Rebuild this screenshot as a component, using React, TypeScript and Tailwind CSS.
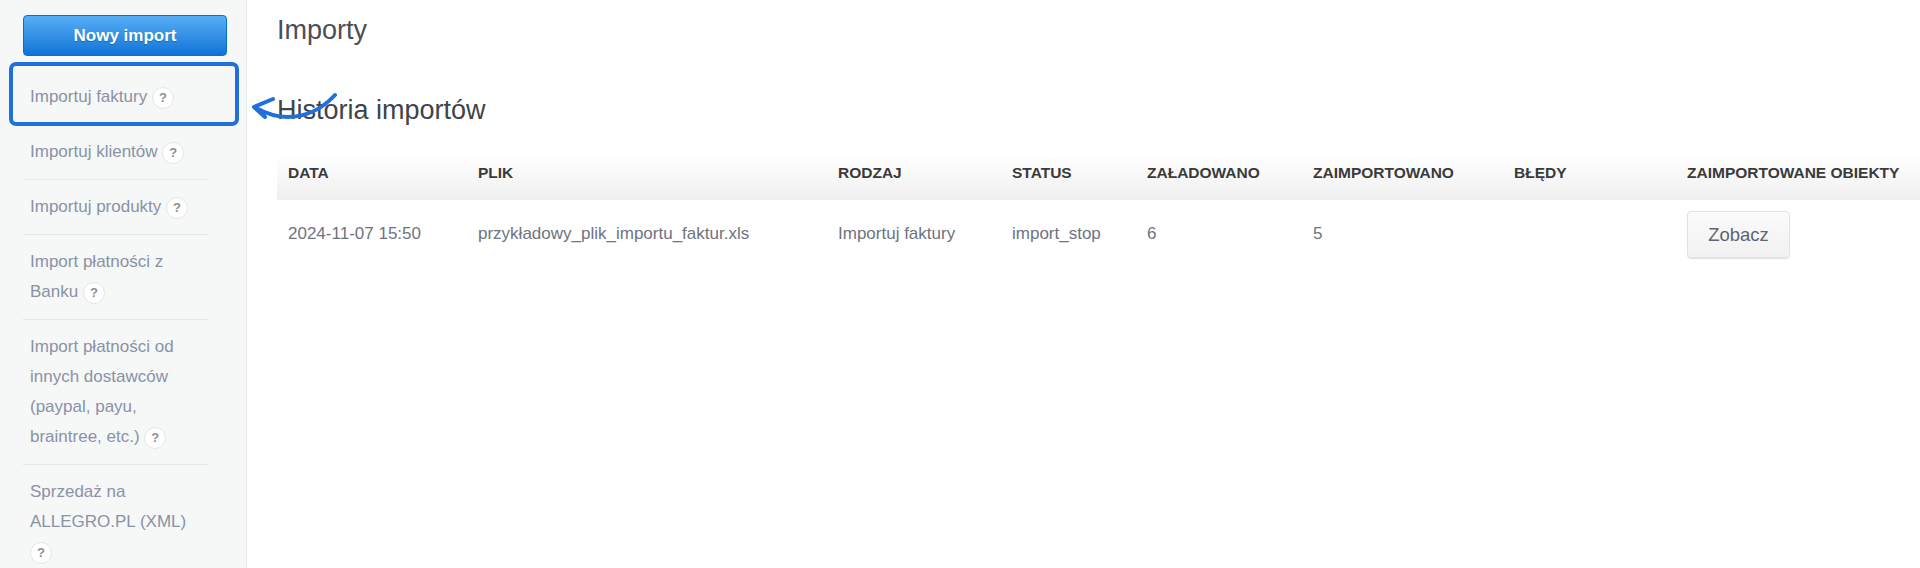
const menu = [
  { label: "Importuj faktury", id: "faktury", border: "border-transparent" },
  { label: "Importuj klientów", id: "klienci", border: "border-[#e3e7ec]" },
  { label: "Importuj produkty", id: "produkty", border: "border-[#e3e7ec]" },
  { label: "Import płatności z Banku", id: "bank", border: "border-[#e3e7ec]" },
  { label: "Import płatności od innych dostawców (paypal, payu, braintree, etc.)", id: "inni", border: "border-[#e3e7ec]" },
  { label: "Sprzedaż na ALLEGRO.PL (XML)", id: "allegro", border: "border-transparent" },
];

const columns = [
  { label: "DATA", width: "w-[190px]" },
  { label: "PLIK", width: "w-[360px]" },
  { label: "RODZAJ", width: "w-[174px]" },
  { label: "STATUS", width: "w-[135px]" },
  { label: "ZAŁADOWANO", width: "w-[166px]" },
  { label: "ZAIMPORTOWANO", width: "w-[201px]" },
  { label: "BŁĘDY", width: "w-[173px]" },
  { label: "ZAIMPORTOWANE OBIEKTY", width: "w-[244px]" },
];

function HelpBadge() {
  return (
    <span className="inline-flex h-[22px] w-[22px] items-center justify-center rounded-full border border-[#e6e6e6] bg-white align-middle text-[13px] font-bold leading-none text-[#8a8f9c]">
      ?
    </span>
  );
}

function Sidebar() {
  return (
    <aside className="relative h-[568px] w-[247px] shrink-0 overflow-hidden border-r border-[#e6e9ec] bg-[#f6f7f7]">
      <div className="px-[23px] pt-[15px]">
        <button className="h-[41px] w-[204px] rounded-[4px] border border-[#0b70c9] bg-gradient-to-b from-[#55aef5] to-[#0a74d6] text-[17px] font-bold text-white [text-shadow:0_1px_1px_rgba(0,0,0,0.25)]">
          Nowy import
        </button>
      </div>
      <ul className="mx-[23px] mt-[14px] w-[185px]">
        {menu.map((item) => (
          <li
            key={item.id}
            className={`border-b py-[12px] pl-[7px] text-[17px] leading-[30px] text-[#8a92a6] ${item.border}`}
          >
            {item.label} <HelpBadge />
          </li>
        ))}
      </ul>
      <div className="absolute left-[9px] top-[62px] h-[64px] w-[230px] rounded-[7px] border-[4px] border-[#1f6fdc]" />
    </aside>
  );
}

function ImportTable() {
  return (
    <table className="w-full table-fixed border-collapse">
      <thead>
        <tr className="h-[45px] bg-gradient-to-b from-white to-[#efefef]">
          {columns.map((col) => (
            <th
              key={col.label}
              className={`${col.width} pb-[10px] pl-[11px] text-left text-[15.5px] font-bold text-[#3a3a3a]`}
            >
              {col.label}
            </th>
          ))}
        </tr>
      </thead>
      <tbody>
        <tr className="h-[68px] text-[17px] text-[#6f7380]">
          <td className="pl-[11px]">2024-11-07 15:50</td>
          <td className="pl-[11px]">przykładowy_plik_importu_faktur.xls</td>
          <td className="pl-[11px]">Importuj faktury</td>
          <td className="pl-[11px]">import_stop</td>
          <td className="pl-[11px]">6</td>
          <td className="pl-[11px]">5</td>
          <td className="pl-[11px]"></td>
          <td className="pl-[11px]">
            <button className="mt-[1px] h-[47px] w-[103px] rounded-[4px] border border-[#e2e2e2] bg-gradient-to-b from-[#fbfbfb] to-[#f1f1f1] text-[18.5px] text-[#5f6470] shadow-[0_1px_1px_rgba(0,0,0,0.12)]">
              Zobacz
            </button>
          </td>
        </tr>
      </tbody>
    </table>
  );
}

export default function App() {
  return (
    <div className="relative flex h-[568px] w-[1920px] overflow-hidden bg-white font-['Liberation_Sans',Arial,sans-serif]">
      <Sidebar />
      <main className="flex-1 pl-[30px]">
        <h1 className="mt-[15px] text-[27px] leading-[30px] font-normal text-[#4a4e57]">Importy</h1>
        <h2 className="mt-[49px] text-[27px] leading-[32px] font-normal text-[#3f434b]">Historia importów</h2>
        <div className="mt-[29px]">
          <ImportTable />
        </div>
      </main>
      {/* odręczna strzałka na zrzucie */}
      <svg className="absolute left-[245px] top-[88px]" width="100" height="40" viewBox="0 0 100 40" fill="none">
        <path
          d="M90 7C78 20 62 29 42 29C30 29 20 25 9 19M28 11L9 19L20 29"
          stroke="#1f6fdc"
          strokeWidth="4"
          strokeLinecap="round"
          strokeLinejoin="round"
        />
      </svg>
    </div>
  );
}
